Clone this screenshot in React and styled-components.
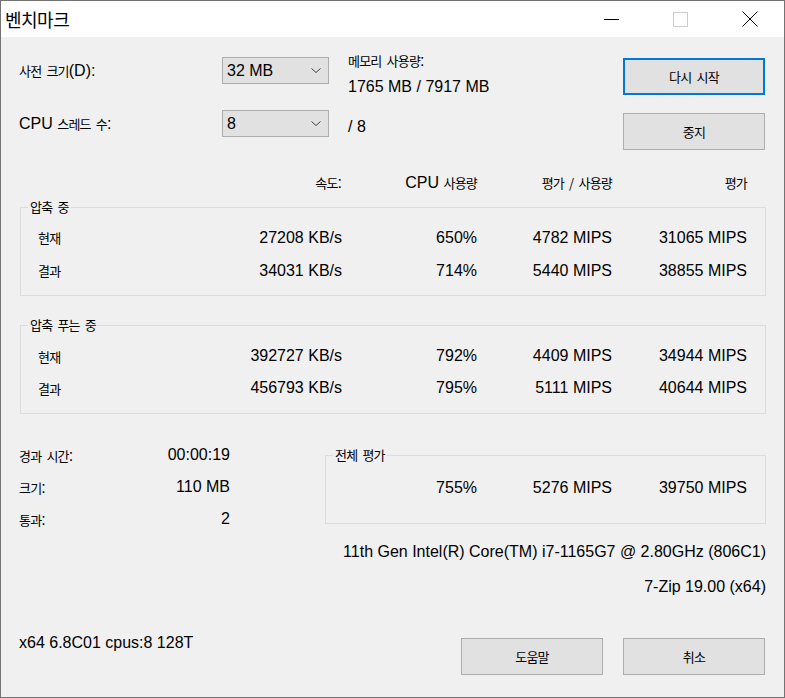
import React from "react";
import styled, { createGlobalStyle } from "styled-components";

const GlobalStyle = createGlobalStyle`
	html, body {
		margin: 0;
		padding: 0;
		background: #ffffff;
	}
	body {
		font-family: "Liberation Sans", "Noto Sans CJK KR", sans-serif;
		font-size: 16px;
		color: #000000;
	}
`;

const Window = styled.div`
	width: 785px;
	height: 698px;
	box-sizing: border-box;
	border: 1px solid #737373;
	background-color: #f0f0f0;
	display: flex;
	flex-direction: column;
	overflow: hidden;
`;

const TitleBar = styled.div`
	height: 36px;
	flex-shrink: 0;
	background-color: #ffffff;
	display: flex;
	align-items: center;
`;

const TitleText = styled.span`
	font-family: "Noto Sans CJK KR", sans-serif;
	font-size: 18px;
	letter-spacing: -0.5px;
	padding-left: 4px;
	line-height: 36px;
`;

const CaptionButtons = styled.div`
	margin-left: auto;
	display: flex;
	height: 100%;
`;

const CaptionButton = styled.div`
	width: 69px;
	height: 36px;
	display: flex;
	align-items: center;
	justify-content: center;
`;

const Body = styled.div`
	flex: 1;
	display: flex;
	flex-direction: column;
	padding: 0 18px;
`;

const Ko = styled.span`
	font-family: "Noto Sans CJK KR", sans-serif;
	font-size: 13px;
	letter-spacing: -0.8px;
	word-spacing: 3px;
`;

const TopSection = styled.div`
	display: flex;
	align-items: flex-start;
	margin-top: 14px;
`;

const FieldColumn = styled.div`
	display: flex;
	flex-direction: column;
	gap: 26px;
	padding-top: 6px;
`;

const FieldRow = styled.div`
	display: flex;
	align-items: center;
	height: 27px;
`;

const FieldLabel = styled.div`
	width: 203px;
	white-space: nowrap;
`;

const Combo = styled.div`
	width: 107px;
	height: 27px;
	box-sizing: border-box;
	border: 1px solid #adadad;
	background-color: #e1e1e1;
	display: flex;
	align-items: center;
	justify-content: space-between;
	padding: 0 7px 0 4px;
`;

const MemoryColumn = styled.div`
	flex: 1;
	margin-left: 19px;
	display: flex;
	flex-direction: column;
`;

const MemoryLine = styled.div`
	line-height: 20px;
	height: 20px;
	margin-top: ${(p) => p.$gap || 0}px;
	white-space: nowrap;
`;

const ActionColumn = styled.div`
	width: 142px;
	margin-right: 1px;
	padding-top: 7px;
	display: flex;
	flex-direction: column;
	gap: 18px;
`;

const PushButton = styled.div`
	width: 142px;
	height: 37px;
	box-sizing: border-box;
	background-color: #e1e1e1;
	border: ${(p) => (p.$default ? "2px solid #0078d7" : "1px solid #adadad")};
	display: flex;
	align-items: center;
	justify-content: center;
`;

const StatGrid = styled.div`
	display: grid;
	grid-template-columns: 1fr 135px 135px 135px 135px;
	align-items: center;
	height: ${(p) => p.$h}px;
	white-space: nowrap;
`;

const HeaderGrid = styled(StatGrid)`
	margin-top: 22px;
	padding-right: 19px;
`;

const TotalGrid = styled(StatGrid)`
	grid-template-columns: 134px 135px 135px;
	justify-content: end;
`;

const Cell = styled.div`
	text-align: right;
`;

const NameCell = styled.div`
	text-align: left;
`;

const GroupBox = styled.div`
	position: relative;
	margin-top: ${(p) => p.$top}px;
	margin-left: 1px;
	border: 1px solid #dcdcdc;
	padding: ${(p) => p.$pad};
	flex: ${(p) => (p.$grow ? 1 : "none")};
	min-width: 0;
`;

const Legend = styled.span`
	position: absolute;
	top: -9px;
	left: 7px;
	padding: 0 2px;
	line-height: 16px;
	background-color: #f0f0f0;
`;

const BottomSection = styled.div`
	display: flex;
	align-items: flex-start;
	margin-top: 25px;
`;

const SummaryList = styled.div`
	width: 211px;
	flex-shrink: 0;
	display: flex;
	flex-direction: column;
`;

const SummaryRow = styled.div`
	display: flex;
	justify-content: space-between;
	align-items: center;
	height: 32px;
	white-space: nowrap;
`;

const SummaryGroup = styled(GroupBox)`
	margin-left: 95px;
`;

const InfoLine = styled.div`
	text-align: right;
	line-height: 20px;
	margin-top: ${(p) => p.$top}px;
	white-space: nowrap;
`;

const Footer = styled.div`
	display: flex;
	align-items: flex-start;
	margin-top: 36px;
`;

const FooterNote = styled.div`
	line-height: 20px;
	white-space: nowrap;
`;

const FooterButtons = styled.div`
	margin-left: auto;
	margin-right: 1px;
	margin-top: 5px;
	display: flex;
	gap: 20px;
`;

const Chevron = () => (
	<svg width="10" height="5" viewBox="0 0 10 5">
		<polyline points="0.5,0.5 5,4.5 9.5,0.5" fill="none" stroke="#404040" strokeWidth="1" />
	</svg>
);

const MinIcon = () => (
	<svg width="15" height="1" viewBox="0 0 15 1">
		<line x1="0" y1="0.5" x2="15" y2="0.5" stroke="#000" strokeWidth="1" />
	</svg>
);

const MaxIcon = () => (
	<svg width="15" height="15" viewBox="0 0 15 15">
		<rect x="0.5" y="0.5" width="14" height="14" fill="none" stroke="#cccccc" strokeWidth="1" />
	</svg>
);

const CloseIcon = () => (
	<svg width="16" height="16" viewBox="0 0 16 16">
		<line x1="0.5" y1="0.5" x2="15.5" y2="15.5" stroke="#000" strokeWidth="1" />
		<line x1="15.5" y1="0.5" x2="0.5" y2="15.5" stroke="#000" strokeWidth="1" />
	</svg>
);

const compressRows = [
	["현재", "27208 KB/s", "650%", "4782 MIPS", "31065 MIPS"],
	["결과", "34031 KB/s", "714%", "5440 MIPS", "38855 MIPS"],
];

const decompressRows = [
	["현재", "392727 KB/s", "792%", "4409 MIPS", "34944 MIPS"],
	["결과", "456793 KB/s", "795%", "5111 MIPS", "40644 MIPS"],
];

const summary = [
	["경과 시간", "00:00:19"],
	["크기", "110 MB"],
	["통과", "2"],
];

const StatRows = ({ rows, h }) =>
	rows.map((r) => (
		<StatGrid key={r[0]} $h={h}>
			<NameCell>
				<Ko>{r[0]}</Ko>
			</NameCell>
			<Cell>{r[1]}</Cell>
			<Cell>{r[2]}</Cell>
			<Cell>{r[3]}</Cell>
			<Cell>{r[4]}</Cell>
		</StatGrid>
	));

const App = () => {
	return (
		<>
			<GlobalStyle />
			<Window>
				<TitleBar>
					<TitleText>벤치마크</TitleText>
					<CaptionButtons>
						<CaptionButton>
							<MinIcon />
						</CaptionButton>
						<CaptionButton>
							<MaxIcon />
						</CaptionButton>
						<CaptionButton>
							<CloseIcon />
						</CaptionButton>
					</CaptionButtons>
				</TitleBar>
				<Body>
					<TopSection>
						<FieldColumn>
							<FieldRow>
								<FieldLabel>
									<Ko>사전 크기</Ko>(D):
								</FieldLabel>
								<Combo>
									<span>32 MB</span>
									<Chevron />
								</Combo>
							</FieldRow>
							<FieldRow>
								<FieldLabel>
									CPU <Ko>스레드 수</Ko>:
								</FieldLabel>
								<Combo>
									<span>8</span>
									<Chevron />
								</Combo>
							</FieldRow>
						</FieldColumn>
						<MemoryColumn>
							<MemoryLine>
								<Ko>메모리 사용량</Ko>:
							</MemoryLine>
							<MemoryLine $gap={6}>1765 MB / 7917 MB</MemoryLine>
							<MemoryLine $gap={20}>/ 8</MemoryLine>
						</MemoryColumn>
						<ActionColumn>
							<PushButton $default>
								<Ko>다시 시작</Ko>
							</PushButton>
							<PushButton>
								<Ko>중지</Ko>
							</PushButton>
						</ActionColumn>
					</TopSection>

					<HeaderGrid $h={20}>
						<NameCell />
						<Cell>
							<Ko>속도</Ko>:
						</Cell>
						<Cell>
							CPU <Ko>사용량</Ko>
						</Cell>
						<Cell>
							<Ko>평가 / 사용량</Ko>
						</Cell>
						<Cell>
							<Ko>평가</Ko>
						</Cell>
					</HeaderGrid>

					<GroupBox $top={15} $pad="13px 18px 8px 17px">
						<Legend>
							<Ko>압축 중</Ko>
						</Legend>
						<StatRows rows={compressRows} h={33} />
					</GroupBox>

					<GroupBox $top={29} $pad="14px 18px 9px 17px">
						<Legend>
							<Ko>압축 푸는 중</Ko>
						</Legend>
						<StatRows rows={decompressRows} h={32} />
					</GroupBox>

					<BottomSection>
						<SummaryList>
							{summary.map(([k, v]) => (
								<SummaryRow key={k}>
									<span>
										<Ko>{k}</Ko>:
									</span>
									<span>{v}</span>
								</SummaryRow>
							))}
						</SummaryList>
						<SummaryGroup $top={16} $pad="16px 18px 19px 17px" $grow>
							<Legend>
								<Ko>전체 평가</Ko>
							</Legend>
							<TotalGrid $h={32}>
								<Cell>755%</Cell>
								<Cell>5276 MIPS</Cell>
								<Cell>39750 MIPS</Cell>
							</TotalGrid>
						</SummaryGroup>
					</BottomSection>

					<InfoLine $top={7}>11th Gen Intel(R) Core(TM) i7-1165G7 @ 2.80GHz (806C1)</InfoLine>
					<InfoLine $top={15}>7-Zip 19.00 (x64)</InfoLine>

					<Footer>
						<FooterNote>x64 6.8C01 cpus:8 128T</FooterNote>
						<FooterButtons>
							<PushButton>
								<Ko>도움말</Ko>
							</PushButton>
							<PushButton>
								<Ko>취소</Ko>
							</PushButton>
						</FooterButtons>
					</Footer>
				</Body>
			</Window>
		</>
	);
};

export default App;
